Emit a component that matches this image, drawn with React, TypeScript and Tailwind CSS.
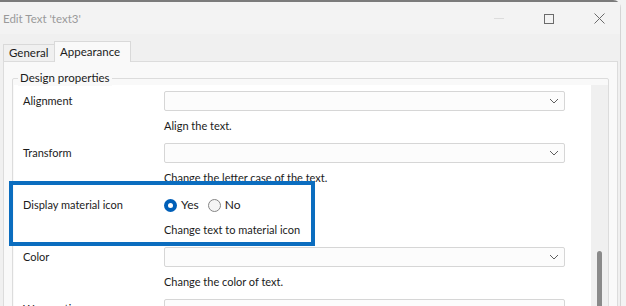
import React from 'react';

const font = { fontFamily: 'Lato, "Liberation Sans", sans-serif' };

const Chevron = () => (
  <svg width="10" height="6" viewBox="0 0 10 6" className="text-[#5f5f5f]">
    <path d="M1 1l4 4 4-4" fill="none" stroke="currentColor" strokeWidth="1" />
  </svg>
);

const SelectBox: React.FC = () => (
  <div className="h-[20px] w-[401px] border border-[#d6d6d6] bg-[#fcfcfc] rounded-[2px] flex items-center justify-end pr-[5px]">
    <Chevron />
  </div>
);

const Radio: React.FC<{ checked?: boolean; label: string }> = ({ checked, label }) => (
  <label className="flex items-center gap-[4px]">
    {checked ? (
      <span className="w-[13px] h-[13px] rounded-full bg-[#005fb8] flex items-center justify-center">
        <span className="w-[5px] h-[5px] rounded-full bg-white" />
      </span>
    ) : (
      <span className="w-[13px] h-[13px] rounded-full border border-[#858585] bg-[#f5f5f5]" />
    )}
    <span className="text-[12px]">{label}</span>
  </label>
);

const Row: React.FC<{ label: string; desc?: string; children: React.ReactNode }> = ({ label, desc, children }) => (
  <div className="h-[52px] flex">
    <div className="w-[150px] pl-[9px] h-[20px] flex items-center">{label}</div>
    <div className="flex flex-col">
      <div className="h-[20px] flex items-center">{children}</div>
      {desc && <div className="h-[30px] flex items-center">{desc}</div>}
    </div>
  </div>
);

export default function App() {
  return (
    <div className="w-[626px] h-[306px] overflow-hidden relative bg-[#f3f3f3] text-[11px] text-[#1b1b1b]" style={font}>
      <div className="w-[621px] h-[320px] border-t-2 border-r border-t-[#7b7b7b] border-r-[#d4d4d4] rounded-tr-[8px] bg-[#f0f0f0]">
        {/* title bar */}
        <div className="h-[32px] flex items-center pl-[3px] bg-[#f3f3f3] pt-px">
          <span className="text-[#9a9a9a] text-[11.5px]">Edit Text 'text3'</span>
          <div className="ml-auto flex items-center">
            <span className="w-[10px] h-px bg-[#dcdcdc] mr-[40px]" />
            <span className="w-[10px] h-[10px] border border-[#6b6b6b] mr-[40px]" />
            <svg width="11" height="11" viewBox="0 0 11 11" className="mr-[15px]">
              <path d="M0.5 0.5l10 10M10.5 0.5l-10 10" stroke="#6b6b6b" strokeWidth="1" />
            </svg>
          </div>
        </div>

        {/* tabs */}
        <div className="h-[27px] flex items-end pl-[3px] relative z-10">
          <div className="h-[17px] w-[52px] border border-b-0 border-[#d9d9d9] bg-[#f0f0f0] flex items-center pl-[5px] text-[11.5px]">General</div>
          <div className="h-[21px] w-[77px] -ml-px border border-b-0 border-[#d9d9d9] bg-[#f9f9f9] flex items-center pl-[5px] translate-y-px text-[11.5px]">Appearance</div>
        </div>

        {/* tab panel */}
        <div className="ml-[3px] w-[615px] h-[260px] border border-[#dcdcdc] bg-[#f9f9f9] pt-[16px] pl-[8px]">
          <div className="relative w-[597px] h-[240px] border border-[#dcdcdc] rounded-[2px]">
            <span className="absolute -top-[9px] left-[5px] px-[2px] bg-[#f9f9f9] leading-[16px] text-[11.5px]">Design properties</span>
            <div className="mt-[6px] ml-px flex h-[240px]">
              <div className="w-[578px] bg-white pt-[6px]">
                <Row label="Alignment" desc="Align the text.">
                  <SelectBox />
                </Row>
                <Row label="Transform" desc="Change the letter case of the text.">
                  <SelectBox />
                </Row>
                <Row label="Display material icon" desc="Change text to material icon">
                  <div className="flex items-center gap-[9px]">
                    <Radio checked label="Yes" />
                    <Radio label="No" />
                  </div>
                </Row>
                <Row label="Color" desc="Change the color of text.">
                  <SelectBox />
                </Row>
                <Row label="Wrap option">
                  <SelectBox />
                </Row>
              </div>
              <div className="w-[17px] bg-[#f0f0f0] relative">
                <span className="absolute left-[6px] top-[166px] w-[5px] h-[120px] rounded-[3px] bg-[#8a8a8a]" />
              </div>
            </div>
          </div>
        </div>
      </div>

      {/* annotation highlight */}
      <div className="absolute left-[9px] top-[181px] w-[306px] h-[65px] border-4 border-[#0b6dbf]" />
    </div>
  );
}
